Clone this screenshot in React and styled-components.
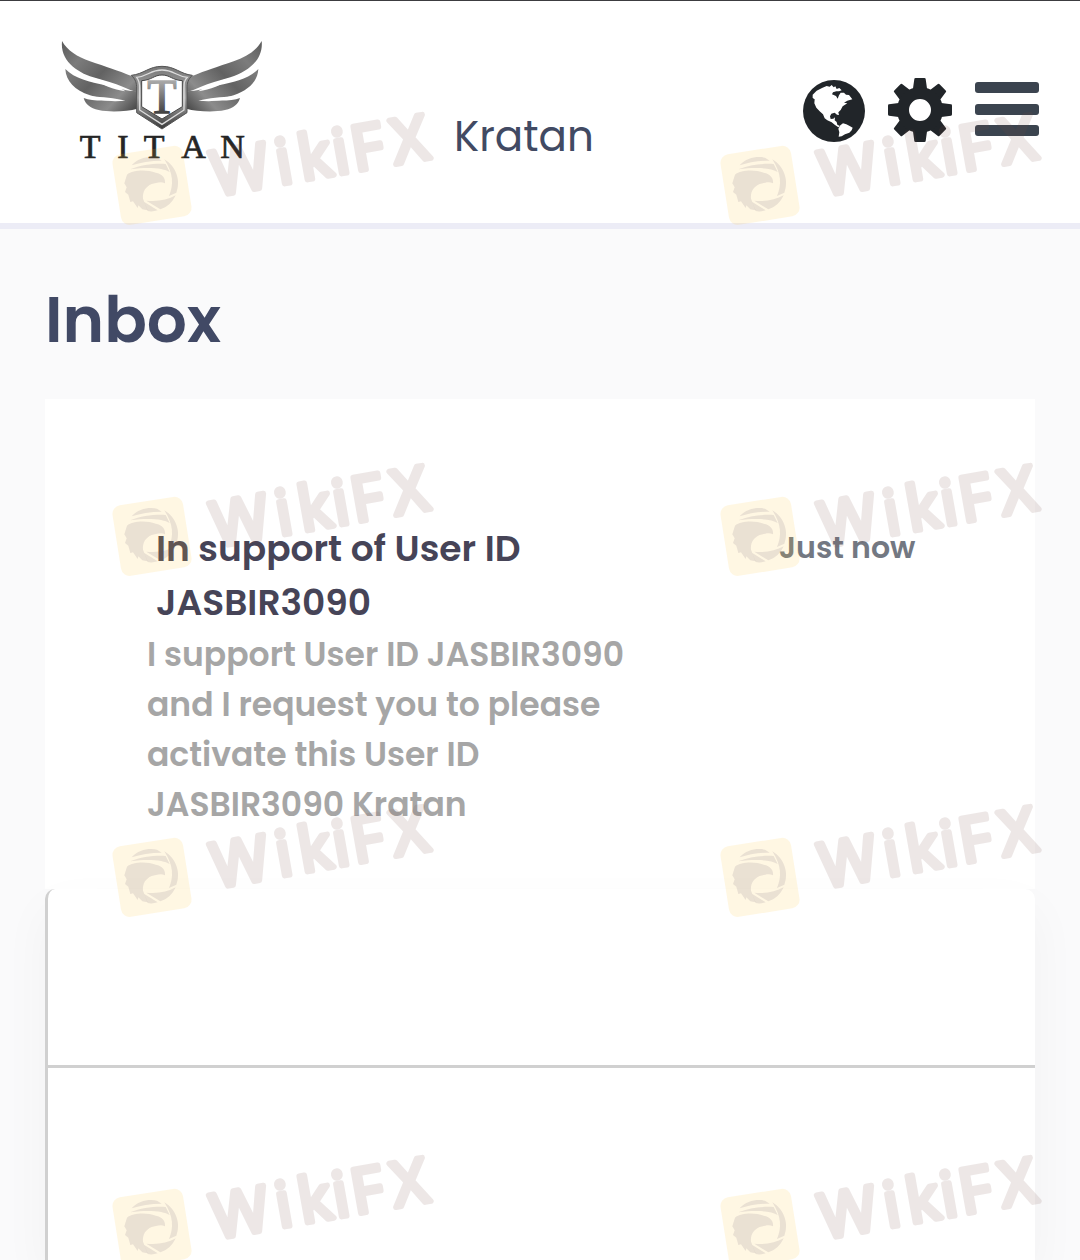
import React from "react"
import styled, { createGlobalStyle } from "styled-components"

const GlobalStyle = createGlobalStyle`
  * {
    box-sizing: border-box;
  }
  body {
    margin: 0;
    background: #fafafb;
    font-family: Poppins, Inter, sans-serif;
  }
`

const messages = [
  {
    id: 1,
    title: "In support of User ID JASBIR3090",
    body: "I support User ID JASBIR3090 and I request you to please activate this User ID JASBIR3090 Kratan",
    time: "Just now",
  },
]

const Wing = () => (
  <g>
    <path d="M66 63 C82 92 112 110 150 124 C196 140 240 154 268 166 L292 172 V216 C276 212 262 206 248 200 C224 190 196 182 160 172 C108 156 60 120 66 63Z" />
    <path d="M76 147 C104 176 150 186 196 196 C226 204 262 214 292 214 V244 C240 244 190 238 150 226 C104 210 78 184 76 147Z" />
    <path d="M131 234 C160 246 210 240 258 240 L292 238 V266 C262 274 212 278 176 270 C150 264 136 252 131 234Z" />
    <path d="M158 174 C196 182 226 194 256 214 C220 208 186 196 158 174Z" fill="#fff" />
    <path d="M150 229 C190 232 222 234 256 242 C214 246 176 242 150 229Z" fill="#fff" />
  </g>
)

const Logo = () => (
  <LogoSvg viewBox="0 0 720 450" role="img" aria-label="Titan">
    <defs>
      <linearGradient id="wing" gradientUnits="userSpaceOnUse" x1="66" y1="60" x2="292" y2="270">
        <stop offset="0" stopColor="#5a5a5a" />
        <stop offset="0.25" stopColor="#7c7c7c" />
        <stop offset="0.5" stopColor="#626262" />
        <stop offset="0.78" stopColor="#8c8c8c" />
        <stop offset="1" stopColor="#444" />
      </linearGradient>
      <linearGradient id="shield" x1="0" y1="0" x2="0" y2="1">
        <stop offset="0" stopColor="#777" />
        <stop offset="0.5" stopColor="#aaa" />
        <stop offset="1" stopColor="#383838" />
      </linearGradient>
      <linearGradient id="letter" x1="0" y1="0" x2="0" y2="1">
        <stop offset="0.2" stopColor="#aaa" />
        <stop offset="0.8" stopColor="#444" />
      </linearGradient>
    </defs>
    <g fill="url(#wing)">
      <Wing />
      <g transform="translate(731 0) scale(-1 1)">
        <Wing />
      </g>
    </g>
    <path d="M274 166 C312 162 326 139 366 139 C406 139 420 162 457 166 C444 178 441 190 441 204 V278 L366 327 L290 278 V204 C290 190 287 178 274 166Z" fill="url(#shield)" stroke="#555" strokeWidth="3" />
    <path d="M290 172 C326 168 330 150 366 150 C402 150 406 168 442 172 C432 182 432 190 432 204 V270 L366 313 L299 270 V204 C299 190 298 182 290 172Z" fill="none" stroke="#ddd" strokeWidth="4" />
    <path d="M305 182 C336 180 342 165 366 165 C390 165 396 180 427 182 V260 L366 297 L305 260Z" fill="#fff" stroke="#444" strokeWidth="3" />
    <text x="366" y="279" textAnchor="middle" fontSize="144" fill="url(#letter)" stroke="url(#letter)" strokeWidth="4">T</text>
    <text x="119 232 311 424 541" y="414" fontSize="102" fill="#252525" stroke="#252525" strokeWidth="2">TITAN</text>
  </LogoSvg>
)

const GlobeIcon = () => (
  <svg width="62" height="62" viewBox="65 60 186 186" aria-hidden="true">
    <circle cx="158" cy="153" r="93" fill="#212529" />
    <path d="M94 104 L106 92 L122 84 L136 78 L145 80 L151 75 L157 82 L162 79 L166 87 L174 84 L181 91 L173 94 L165 94 L155 97 L152 103 L164 108 L169 116 L173 106 L178 98 L188 98 L194 104 L203 105 L213 118 L198 122 L188 128 L198 130 L184 139 L178 150 L171 157 L173 165 L167 164 L160 158 L150 161 L146 169 L148 177 L156 176 L161 172 L160 181 L166 186 L168 194 L176 198 L171 202 L160 194 L151 187 L138 181 L130 175 L125 163 L115 154 L105 143 L99 130 L100 118 L94 114Z" fill="#fff" />
    <path d="M177 196 L185 190 L195 193 L205 198 L214 203 L211 211 L204 218 L191 223 L181 229 L172 230 L174 217 L171 206Z" fill="#fff" />
  </svg>
)

const CogIcon = () => (
  <svg width="64" height="64" viewBox="-96 -96 192 192" aria-hidden="true">
    <g fill="#212529">
      {[0, 45, 90, 135, 180, 225, 270, 315].map((a) => (
        <path key={a} d="M-22 -58 L-17 -93 Q-17 -96 -13 -96 H13 Q17 -96 17 -93 L22 -58Z" transform={`rotate(${a})`} />
      ))}
    </g>
    <circle r="51" fill="none" stroke="#212529" strokeWidth="36" />
  </svg>
)

const MenuIcon = () => (
  <svg width="64" height="64" viewBox="0 0 64 64" fill="#3b444f" aria-hidden="true">
    <rect y="4" width="64" height="11" rx="3" />
    <rect y="26" width="64" height="11" rx="3" />
    <rect y="47" width="64" height="11" rx="3" />
  </svg>
)

const Mark = () => (
  <MarkSvg viewBox="0 0 1050 450">
    <rect x="49" y="182" width="214" height="214" rx="26" fill="#ffc83c" fillOpacity="0.14" transform="rotate(-9 156 289)" />
    {/* eagle head inside the shutter ring */}
    <g fill="#604a70" fillOpacity="0.13" transform="translate(15 145)">
      <path d="M80 84 C100 62 130 56 156 61 L170 70 C136 70 106 76 80 84Z" />
      <path d="M76 96 C110 82 150 78 182 80 L194 104 C176 92 130 88 76 96Z" />
      <path d="M178 66 C214 88 228 130 214 166 L192 176 C206 144 206 108 178 66Z" />
      <path d="M124 190 C156 194 188 188 212 174 C202 196 186 210 166 216Z" />
      <path d="M118 194 L158 219 C146 223 136 223 128 221Z" />
      <path d="M66 112 C84 98 124 96 152 106 C172 110 182 122 180 138 C166 130 152 138 140 140 C122 148 112 162 114 184 L128 219 L112 216 L100 204 L98 212 L84 192 L76 194 L70 172 L60 164 L65 150 L58 138Z" />
    </g>
    <text x="347 542 611 715 772 896" y="323" fontSize="186" transform="rotate(-10 334 323)">
      WikiFX
    </text>
  </MarkSvg>
)

const Message = ({ title, body, time }) => (
  <MessageRow>
    <div>
      <MessageTitle>{title}</MessageTitle>
      <MessageBody>{body}</MessageBody>
    </div>
    <Time>{time}</Time>
  </MessageRow>
)

const App = () => {
  return (
    <Page>
      <GlobalStyle />
      <Header>
        <Logo />
        <UserName>Kratan</UserName>
        <Actions>
          <IconButton type="button" aria-label="Language"><GlobeIcon /></IconButton>
          <IconButton type="button" aria-label="Settings"><CogIcon /></IconButton>
          <IconButton type="button" aria-label="Menu"><MenuIcon /></IconButton>
        </Actions>
      </Header>
      <Main>
        <Heading>Inbox</Heading>
        <Card>
          {messages.map((m) => (
            <Message key={m.id} {...m} />
          ))}
        </Card>
        <Thread>
          <ThreadTop />
        </Thread>
      </Main>
      <Watermarks aria-hidden="true">
        {Array.from({ length: 8 }, (_, i) => (
          <Mark key={i} />
        ))}
      </Watermarks>
    </Page>
  )
}

export default App

const Page = styled.div`
  position: relative;
  display: flex;
  flex-direction: column;
  min-height: 100vh;
  overflow: hidden;
  border-top: 1px solid #3c3c40;
`

const Header = styled.header`
  display: flex;
  align-items: flex-start;
  padding: 19px 41px 53px 40px;
  background: #fff;
  border-bottom: 6px solid #ececf6;
`

const LogoSvg = styled.svg`
  flex: none;
  width: 240px;
  height: 150px;
  font-family: "Liberation Serif", serif;
`

const UserName = styled.span`
  margin: 87px 0 0 174px;
  color: #414a63;
  font-size: 42px;
  line-height: 60px;
`

const Actions = styled.div`
  display: flex;
  align-items: flex-end;
  gap: 23px;
  margin: 58px 0 0 auto;
`

const IconButton = styled.button`
  display: flex;
  padding: 0;
  border: 0;
  background: none;
  cursor: pointer;
`

const Main = styled.main`
  display: flex;
  flex: 1;
  flex-direction: column;
  padding: 51px 45px 0;
`

const Heading = styled.h1`
  margin: 0 0 39px;
  color: #414965;
  font-size: 63px;
  font-weight: 600;
  line-height: 80px;
`

const Card = styled.section`
  background: #fff;
`

const MessageRow = styled.article`
  display: grid;
  grid-template-columns: 1fr 256px;
  column-gap: 130px;
  padding: 123px 0 59px 102px;
`

const MessageTitle = styled.h2`
  margin: 0;
  padding: 0 60px 0 9px;
  color: #464457;
  font-size: 36px;
  font-weight: 600;
  line-height: 54px;
`

const MessageBody = styled.p`
  margin: 0;
  color: #a6a6a6;
  font-size: 33px;
  font-weight: 600;
  line-height: 50px;
`

const Time = styled.time`
  color: #737882;
  font-size: 30px;
  font-weight: 600;
  line-height: 52px;
`

const Thread = styled.section`
  flex: 1;
  background: #fff;
  border-left: 3px solid #d0d0d0;
  border-radius: 10px 10px 0 0;
  box-shadow: 0 20px 50px rgba(0, 0, 0, 0.04);
`

const ThreadTop = styled.div`
  height: 179px;
  border-bottom: 3px solid #d0d0d0;
`

const Watermarks = styled.div`
  position: absolute;
  inset: 0;
  display: grid;
  grid-template-columns: 608px 608px;
  grid-template-rows: 351px 341px 351px 150px;
  padding: 88px 0 0 100px;
  overflow: hidden;
  pointer-events: none;
`

const MarkSvg = styled.svg`
  width: 350px;
  height: 150px;
  overflow: visible;

  text {
    fill: #784c46;
    stroke: #784c46;
    stroke-width: 17px;
    stroke-linejoin: round;
    font-family: "Open Sans", sans-serif;
    opacity: 0.13;
  }
`
